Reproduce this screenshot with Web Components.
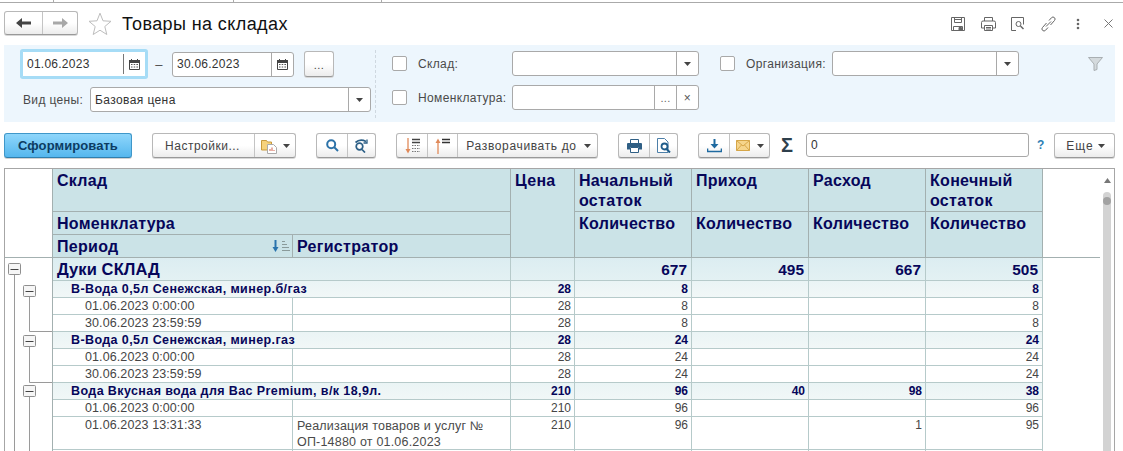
<!DOCTYPE html>
<html lang="ru"><head><meta charset="utf-8"><title>Товары на складах</title>
<style>
html,body{margin:0;padding:0;background:#fff;width:1123px;height:451px;overflow:hidden;font-family:"Liberation Sans",Arial,sans-serif;}
</style></head><body>
<app-window></app-window>
<script>
function def(name, html, extra){
  customElements.define(name, class extends HTMLElement{
    constructor(){super();this.attachShadow({mode:'open'}).innerHTML=html;}
    connectedCallback(){ if(extra) extra.call(this); }
  });
}
const arrow='<svg width="7" height="4" viewBox="0 0 7 4"><path d="M0 0h7L3.5 4z" fill="#444"/></svg>';
const cal='<svg width="11" height="11" viewBox="0 0 11 11"><path d="M.5 1.5h10v9H.5z" fill="#fff" stroke="#444"/><path d="M0 1h11v3H0z" fill="#444"/><path d="M2 0h1v2H2zM8 0h1v2H8z" fill="#444"/><path d="M2 5h1.5v1H2zM4.7 5h1.5v1H4.7zM7.4 5H9v1H7.4zM2 7.5h1.5v1H2zM4.7 7.5h1.5v1H4.7zM7.4 7.5H9v1H7.4z" fill="#555"/></svg>';

def('ui-field',`<style>
:host{display:flex;box-sizing:border-box;height:25px;background:#fff;border:1px solid #a9a9a9;border-radius:3px;font-size:12px;color:#333;letter-spacing:.25px;align-items:stretch;flex:none}
:host([focused]){border-color:#a6dcf6;box-shadow:0 0 0 2px #a6dcf6;border-radius:1px}
.t{flex:1;padding-left:4px;display:flex;align-items:center;white-space:nowrap;overflow:hidden}
::slotted([slot=b]){display:flex;align-items:center;justify-content:center;width:22px;border-left:1px solid #a9a9a9;flex:none;color:#555;font-size:12px;box-sizing:border-box}
:host([focused]) ::slotted([slot=b]){border-left-color:#777;margin:2px 0}
</style><div class="t"><slot></slot></div><slot name="b"></slot>`);

def('ui-check',`<style>:host{display:block;box-sizing:border-box;width:15px;height:15px;background:#fff;border:1px solid #a9a9a9;border-radius:2px;flex:none}</style>`);
def('ui-label',`<style>:host{display:block;font-size:12px;color:#4a4a4a;letter-spacing:.35px;white-space:nowrap;flex:none}</style><slot></slot>`);

def('tb-group',`<style>
:host{display:flex;box-sizing:border-box;height:25px;border:1px solid #b8b8b8;border-bottom-color:#999;border-radius:3px;background:linear-gradient(#fff,#fff 50%,#ececec);flex:none;box-shadow:0 1px 0 #d8d8d8}
::slotted(*){display:flex;align-items:center;justify-content:center;box-sizing:border-box;height:100%;font-size:12px;color:#444;letter-spacing:.5px;white-space:nowrap;gap:6px}
::slotted(*:not(:first-child)){border-left:1px solid #c4c4c4}
</style><slot></slot>`);

def('app-titlebar',`<style>
:host{display:block;height:45px;box-sizing:border-box}
.strip{display:flex;height:3px;box-sizing:border-box;border-bottom:1px solid #aaa}
.strip i{display:block;box-sizing:border-box;height:2px;border-right:1px solid #aaa}
.row{display:flex;height:42px;align-items:flex-start}
tb-group{margin:8px 0 0 4px;height:24px}
h1{margin:0 0 0 10px;font:400 18px/22px "Liberation Sans",Arial,sans-serif;color:#111;padding-top:10px;letter-spacing:.4px}
.star{margin:9px 0 0 10px;flex:none}
.tools{margin-left:auto;display:flex;padding-top:12px}
.tools span{width:30px;height:17px;display:flex;align-items:center;justify-content:center}
svg{display:block}
</style>
<div class="strip"><i style="width:54px"></i><i style="width:180px"></i><i style="width:148px"></i></div>
<div class="row">
<tb-group>
<span style="width:37px"><svg width="16" height="10" viewBox="0 0 16 10"><path d="M15 3.6H6V0L0 5l6 5V6.4h9z" fill="#444"/></svg></span>
<span style="width:35px"><svg width="16" height="10" viewBox="0 0 16 10"><path d="M1 3.6h9V0l6 5-6 5V6.4H1z" fill="#a8a8a8"/></svg></span>
</tb-group>
<svg class="star" width="24" height="24" viewBox="0 0 24 24"><path d="M12 1.2l3 7.6 8 .5-6.2 5.2 2 8L12 18.2 5.2 22.5l2-8L1 9.3l8-.5z" fill="#fff" stroke="#bdbdbd"/></svg>
<h1>Товары на складах</h1>
<div class="tools">
<span><svg width="16" height="16" viewBox="0 0 16 16" fill="none" stroke="#666"><path d="M1.5 1.5h13v13h-13z"/><path d="M4.5 1.5v5h7v-5M5 3.5h6M3.5 14.5v-4h9v4"/><path d="M9 11.5h2.5v3H9z" fill="#666"/></svg></span>
<span><svg width="17" height="16" viewBox="0 0 17 16" fill="none" stroke="#666"><path d="M4.5 5V1.5h8V5M4 12H1.5V6.5q0-1.5 1.5-1.5h11q1.500 0 1.500 1.500V12H13"/><path d="M4.500 9.500h8v5h-8zM6 11.500h5M6 13h5"/></svg></span>
<span><svg width="16" height="16" viewBox="0 0 16 16" fill="none" stroke="#666"><path d="M6 14.500H1.500v-13h12v7"/><circle cx="8.500" cy="8" r="2.500"/><path d="M10.500 10l3 3" stroke-width="1.500"/></svg></span>
<span><svg width="17" height="16" viewBox="0 0 17 16" fill="none" stroke="#666"><path d="M6.500 7l-4 4.500a2 2 0 0 0 3 2.800l2.500-2.800"/><path d="M10.500 9l4-4.500a2 2 0 0 0-3-2.800L9 4.500"/><path d="M6 10.500l5-5"/></svg></span>
<span><svg width="4" height="12" viewBox="0 0 4 12" fill="#666"><circle cx="2" cy="2" r="1.300"/><circle cx="2" cy="6" r="1.300"/><circle cx="2" cy="10" r="1.300"/></svg></span>
<span><svg width="9" height="9" viewBox="0 0 9 9" stroke="#777"><path d="M.5.500l8 8M8.500.500l-8 8"/></svg></span>
</div></div>`);

def('filter-panel',`<style>
:host{display:flex;box-sizing:border-box;margin-left:4px;width:1111px;height:77px;background:#edf6fd;padding-top:6px;align-items:flex-start}
.c1{width:371px;padding-left:18px;box-sizing:border-box;flex:none}
.r{display:flex;align-items:center}
.r2{margin-top:10px;padding-right:0}
.dash{width:0;height:68px;border-left:1px dashed #cfd8e0;margin:-1px 0 0 0;flex:none}
.c2{padding-left:16px;flex:1}
.g{display:flex;align-items:center}
.g+.g{margin-top:9px}
svg{display:block}
.btn{width:30px;height:26px;margin-left:10px;font-size:11px;color:#666;justify-content:center;align-items:center;box-sizing:border-box}
</style>
<div class="c1">
 <div class="r">
  <ui-field focused style="width:124px;height:26px">01.06.2023<span slot="b">${cal}</span></ui-field>
  <ui-label style="width:26px;text-align:center;font-size:13px">–</ui-label>
  <ui-field style="width:122px">30.06.2023<span slot="b">${cal}</span></ui-field>
  <tb-group class="btn" style="height:26px"><span style="width:28px;font-size:11px;padding-top:2px">...</span></tb-group>
 </div>
 <div class="r r2">
  <ui-label style="width:67px;margin-left:1px;margin-right:0">Вид цены:</ui-label>
  <ui-field style="width:281px;margin-left:0;letter-spacing:.4px">Базовая цена<span slot="b">${arrow}</span></ui-field>
 </div>
</div>
<div class="dash"></div>
<div class="c2">
 <div class="g">
  <ui-check></ui-check><ui-label style="margin-left:11px;width:94px">Склад:</ui-label>
  <ui-field style="width:187px"><span slot="b">${arrow}</span></ui-field>
  <ui-check style="margin-left:21px"></ui-check><ui-label style="margin-left:11px;width:86px">Организация:</ui-label>
  <ui-field style="width:187px"><span slot="b">${arrow}</span></ui-field>
  <svg style="margin-left:69px" width="15" height="14" viewBox="0 0 15 14"><path d="M.5.500h14L9 7v5.500l-3 1V7z" fill="#d4dadd" stroke="#a9afb2"/></svg>
 </div>
 <div class="g">
  <ui-check></ui-check><ui-label style="margin-left:11px;width:94px">Номенклатура:</ui-label>
  <ui-field style="width:187px"><span slot="b" style="font-size:11px;color:#666">...</span><span slot="b">×</span></ui-field>
 </div>
</div>`);

def('action-bar',`<style>
:host{display:flex;box-sizing:border-box;margin-top:11px;padding-left:4px;height:25px;align-items:flex-start}
svg{display:block;flex:none}
.main{width:128px;height:25px;box-sizing:border-box;border:1px solid #3f97c9;border-bottom-color:#2f7fae;border-radius:3px;background:linear-gradient(#8fd6fb,#55b7ee);color:#0c3c63;font:700 13px/23px "Liberation Sans",Arial,sans-serif;text-align:center;letter-spacing:.07px;flex:none;box-shadow:0 1px 0 #d0d0d0}
.sig{font:700 20px/25px "Liberation Sans",Arial,sans-serif;color:#2e3f4c;width:12px;margin-left:11px;flex:none;text-align:center}
.q{font:700 12px/24px "Liberation Sans",Arial,sans-serif;color:#2f7fb5;margin-left:8px;flex:none;width:6px}
</style>
<div class="main">Сформировать</div>
<tb-group style="margin-left:20px;width:144px">
 <span style="width:101px;padding-right:2px">Настройки...</span>
 <span style="flex:1;gap:5px"><svg width="17" height="16" viewBox="0 0 17 16"><path d="M.5 2.500h5l1 1.500h4v8H.5z" fill="#f6d27c" stroke="#c79a3c"/><path d="M6.500 6.500h6l3 3v6h-9z" fill="#fff" stroke="#aaa"/><path d="M9 13v-2M11 13v-3.500M13 13v-1" stroke="#d2604a"/></svg>${arrow}</span>
</tb-group>
<tb-group style="margin-left:20px;width:60px">
 <span style="width:30px"><svg width="13" height="13" viewBox="0 0 13 13" fill="none" stroke="#2c72a8" stroke-width="2"><circle cx="5.200" cy="5.200" r="4"/><path d="M8 8l4 4"/></svg></span>
 <span style="flex:1"><svg width="15" height="14" viewBox="0 0 15 14" fill="none" stroke="#2c5f86" stroke-width="1.700"><circle cx="5.500" cy="7.500" r="3.300"/><path d="M8 10.500l3 3"/><path d="M1.500 3.500Q6 -.5 12 2.500"/><path d="M13 .5v3.500H9.500" stroke-width="1.300"/></svg></span>
</tb-group>
<tb-group style="margin-left:20px;width:202px">
 <span style="width:30px"><svg width="15" height="16" viewBox="0 0 15 16"><path d="M3 0v14" stroke="#e08a5a" stroke-width="1.300"/><path d="M.5 11L3 15.500 5.500 11z" fill="#e08a5a"/><path d="M7 1.500h8M7 4.500h8" stroke="#444" stroke-width="1.400"/><path d="M7 7.500h8M7 10.500h8M7 13.500h8" stroke="#777" stroke-dasharray="1.500 1"/></svg></span>
 <span style="width:30px"><svg width="15" height="16" viewBox="0 0 15 16"><path d="M3 2v14" stroke="#e08a5a" stroke-width="1.300"/><path d="M.5 5L3 .5 5.500 5z" fill="#e08a5a"/><path d="M7 1.500h8M7 4.500h8" stroke="#333" stroke-width="1.400"/></svg></span>
 <span style="flex:1;gap:7px;letter-spacing:.65px;padding-left:2px">Разворачивать до ${arrow}</span>
</tb-group>
<tb-group style="margin-left:20px;width:60px">
 <span style="width:30px"><svg width="15" height="14" viewBox="0 0 15 14"><path d="M3.500.5h8v4h-8z" fill="#fff" stroke="#2f5f85"/><path d="M0 5q0-1 1-1h13q1 0 1 1v5.500h-3V8H3v2.500H0z" fill="#2f5f85"/><path d="M3.500 8.500h8v5h-8z" fill="#fff" stroke="#2f5f85"/></svg></span>
 <span style="flex:1"><svg width="14" height="15" viewBox="0 0 14 15"><path d="M.5.500h7l3.500 3.500v10.500H.5z" fill="#fff" stroke="#4d7fa8"/><circle cx="7.500" cy="8.500" r="3" fill="#fff" stroke="#1f5c8a" stroke-width="1.800"/><path d="M9.500 11l3.500 3.500" stroke="#1f5c8a" stroke-width="2"/></svg></span>
</tb-group>
<tb-group style="margin-left:20px;width:72px">
 <span style="width:30px"><svg width="15" height="14" viewBox="0 0 15 14"><path d="M7.500 0v7" stroke="#1f6aa0" stroke-width="2"/><path d="M3.500 5h8l-4 4.500z" fill="#1f6aa0"/><path d="M.5 9.500v3h14v-3" fill="none" stroke="#1f6aa0" stroke-width="1.600"/></svg></span>
 <span style="flex:1;gap:7px"><svg width="14" height="11" viewBox="0 0 14 11"><path d="M.5.500h13v10H.500z" fill="#f6d58c" stroke="#d6a648"/><path d="M.5.500l6.500 5.500 6.500-5.500M.5 10.500l5-5.500M13.500 10.500l-5-5.500" fill="none" stroke="#d6a648"/></svg>${arrow}</span>
</tb-group>
<div class="sig">Σ</div>
<ui-field style="width:223px;height:24px;margin-left:13px;font-size:12px">0</ui-field>
<div class="q">?</div>
<tb-group style="margin-left:11px;width:61px"><span style="flex:1;gap:4px;padding-left:2px;letter-spacing:1px">Еще ${arrow}</span></tb-group>`);

def('report-header',`<style>
:host{display:grid;grid-template-columns:240px 218px 64px 117px 117px 117px 117px;grid-template-rows:43px 23px 23px;flex:none;width:990px}
div{box-sizing:border-box;background:#cbe3e7;border-right:1px solid #a3b0b0;border-bottom:1px solid #a3b0b0;color:#06065a;font:700 16px/20px "Liberation Sans",Arial,sans-serif;letter-spacing:.3px;padding:2px 4px 0;white-space:nowrap}
.p{display:flex;justify-content:space-between;align-items:center;padding:1px 1px 0 4px}
.s1{grid-column:1/3}
.tall{grid-row:2/4}
svg{display:block}
</style>
<div class="s1">Склад</div>
<div style="grid-column:3;grid-row:1/4">Цена</div>
<div>Начальный<br>остаток</div><div>Приход</div><div>Расход</div><div>Конечный<br>остаток</div>
<div class="s1" style="grid-row:2">Номенклатура</div>
<div class="tall" style="grid-column:4">Количество</div><div class="tall" style="grid-column:5">Количество</div><div class="tall" style="grid-column:6">Количество</div><div class="tall" style="grid-column:7">Количество</div>
<div class="p" style="grid-row:3;grid-column:1">Период<svg width="19" height="13" viewBox="0 0 19 13"><path d="M3.500 0v9" stroke="#2a74ad" stroke-width="2"/><path d="M.5 7h6l-3 5z" fill="#2a74ad"/><path d="M10 1.500h3M10 4.500h5M10 7.500h7M10 10.500h8" stroke="#8a9a9a"/></svg></div>
<div style="grid-row:3;grid-column:2">Регистратор</div>`);

def('report-row',`<style>
:host{display:grid;grid-template-columns:240px 218px 64px 117px 117px 117px 117px;height:17px;width:990px;flex:none;font:400 12px/15px "Liberation Sans",Arial,sans-serif;color:#454545}
:host([tall]){height:33px}
div{box-sizing:border-box;border-right:1px solid #b6caca;border-bottom:1px solid #b6caca;padding:1px 3px 0;text-align:right;white-space:nowrap;overflow:hidden;background:#fff}
.n{text-align:left;padding-left:32px;font-size:12.500px;letter-spacing:.1px}
.r{text-align:left;padding-left:4px;font-size:12.500px;letter-spacing:.2px;white-space:normal;color:#4a4a4a;line-height:16px}
:host([kind=total]){height:23px;color:#06065a;font:700 15.400px/19px "Liberation Sans",Arial,sans-serif}
:host([kind=total]) div{background:linear-gradient(#dcedf1,#e3f1f3);padding:2px 4px 0}
:host([kind=total]) .n{padding-left:4px;font-size:16.500px;letter-spacing:.1px}
:host([kind=group]){color:#06065a;font-weight:700}
:host([kind=group]) div{background:linear-gradient(#eaf4f5,#f1f7f7)}
:host([kind=group]) .n{padding-left:18px;font-size:12.500px;letter-spacing:.4px}
.w{grid-column:1/3}
</style><div class="n"><slot></slot></div><div class="r"><slot name="reg"></slot></div><div></div><div></div><div></div><div></div><div></div>`,
function(){
  const d=this.shadowRoot.querySelectorAll('div');
  ['price','a','b','c','d'].forEach((k,i)=>{ d[i+2].textContent=this.getAttribute(k)||''; });
  const k=this.getAttribute('kind');
  if(k==='total'||k==='group'){ d[0].classList.add('w'); d[1].remove(); }
});

def('report-table',`<style>
:host{display:flex;box-sizing:border-box;margin:10px 0 0 4px;width:1111px;height:283px;border:1px solid #a6a6a6;border-bottom:0;overflow:hidden;background:#fff}
.gut{width:48px;flex:none;box-sizing:border-box;border-right:1px solid #a3b0b0}
.gh{height:89px;box-sizing:border-box;border-bottom:1px solid #a3b0b0;margin-right:-1px}
.main{display:flex;flex-direction:column;flex:none;width:990px}
.rest{width:57px;flex:none;height:89px;box-sizing:border-box;border-bottom:1px solid #a3b0b0}
.sb{flex:1;display:flex;flex-direction:column;align-items:flex-start;padding-left:3px}
.up{width:8px;height:23px;display:flex;align-items:center;justify-content:center;flex:none}
.track{width:8px;flex:1;background:#d3d3d3;border-radius:4px 4px 0 0;padding-top:5px;box-sizing:border-box}
.thumb{display:block;width:8px;height:8px;border-radius:50%;background:#a2a2a2}
svg{display:block}
</style>
<div class="gut"><div class="gh"></div>
<svg width="47" height="193" viewBox="5 258 47 193" fill="none">
<path d="M14.500 274v177M29.500 297v34.500H52M29.500 347v35.500H52M29.500 397v54" stroke="#9a9a9a"/>
<g fill="#f6f6f6" stroke="#8f8f8f"><rect x="8.500" y="263.500" width="12" height="11" rx="1"/><rect x="23.500" y="285.500" width="12" height="11" rx="1"/><rect x="23.500" y="335.500" width="12" height="11" rx="1"/><rect x="23.500" y="385.500" width="12" height="11" rx="1"/></g>
<path d="M10.500 269.500h8M25.500 291.500h8M25.500 341.500h8M25.500 391.500h8" stroke="#444"/>
</svg></div>
<div class="main"><report-header></report-header><slot></slot></div>
<div class="rest"></div>
<div class="sb"><div class="up"><svg width="7" height="5" viewBox="0 0 7 5"><path d="M0 5h7L3.500 0z" fill="#777"/></svg></div><div class="track"><span class="thumb"></span></div></div>`);

def('app-window',`<style>:host{display:block;width:1123px;height:451px;overflow:hidden}</style>
<app-titlebar></app-titlebar>
<filter-panel></filter-panel>
<action-bar></action-bar>
<report-table>
<report-row kind="total" a="677" b="495" c="667" d="505">Дуки СКЛАД</report-row>
<report-row kind="group" price="28" a="8" d="8">В-Вода 0,5л Сенежская, минер.б/газ</report-row>
<report-row price="28" a="8" d="8">01.06.2023 0:00:00</report-row>
<report-row price="28" a="8" d="8">30.06.2023 23:59:59</report-row>
<report-row kind="group" price="28" a="24" d="24">В-Вода 0,5л Сенежская, минер.газ</report-row>
<report-row price="28" a="24" d="24">01.06.2023 0:00:00</report-row>
<report-row price="28" a="24" d="24">30.06.2023 23:59:59</report-row>
<report-row kind="group" price="210" a="96" b="40" c="98" d="38">Вода Вкусная вода для Вас Premium, в/к 18,9л.</report-row>
<report-row price="210" a="96" d="96">01.06.2023 0:00:00</report-row>
<report-row tall price="210" a="96" c="1" d="95">01.06.2023 13:31:33<span slot="reg">Реализация товаров и услуг № ОП-14880 от 01.06.2023</span></report-row>
<report-row></report-row>
</report-table>`);
</script>
</body></html>
